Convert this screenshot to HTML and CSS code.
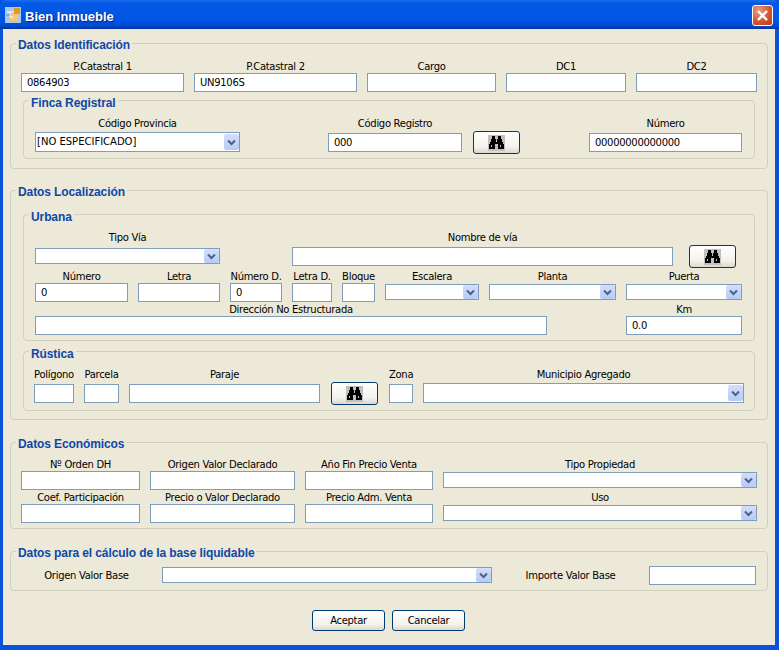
FILE: index.html
```html
<!DOCTYPE html>
<html lang="es">
<head>
    <meta charset="UTF-8">
    <title>Bien Inmueble</title>
    <link rel="stylesheet" href="styles.css">
</head>
<body>
    <svg class="defs" width="0" height="0">
        <symbol id="binoculars" viewBox="0 0 17 16">
            <rect width="17" height="16" fill="#c0c0c0"/>
            <path d="M4 1h3v3h1v2h1V4h1V1h3v3h1v3h1v2h1v5h-6V9H7v5H1V9h1V7h1V4h1z" fill="#000"/>
            <path d="M3 10h1v2H3zM12 10h1v2h-1zM8 6h1v1H8z" fill="#c0c0c0"/>
        </symbol>
        <symbol id="chevron" viewBox="0 0 9 7">
            <path d="M1 1.5l3.500 3.500L8 1.500" fill="none" stroke="#4d6185" stroke-width="2"/>
        </symbol>
    </svg>

    <div class="window">
        <header class="titlebar">
            <svg class="app-icon" width="16" height="16" viewBox="0 0 16 16">
                <rect width="16" height="16" fill="#a9c9ec"/>
                <rect x="9" y="1" width="6" height="6" fill="#e8981f"/>
                <rect x="5" y="7" width="8" height="7" fill="#f4c878"/>
                <path d="M2 5h7M5 5v5h3" stroke="#fff" fill="none"/>
                <path d="M1 8h4" stroke="#6f8fb8"/>
            </svg>
            <span class="title">Bien Inmueble</span>
            <button class="close" aria-label="Cerrar">
                <svg width="13" height="13" viewBox="0 0 13 13">
                    <path d="M2 2l9 9M11 2l-9 9" stroke="#fff" stroke-width="2.400"/>
                </svg>
            </button>
        </header>

        <form class="client">
            <!-- Datos Identificacion -->
            <fieldset class="group group-ident">
                <legend>Datos Identificación</legend>
                <div class="row">
                    <div class="field w163"><label>P.Catastral 1</label><input type="text" value="0864903"></div>
                    <div class="field w163"><label>P.Catastral 2</label><input type="text" value="UN9106S"></div>
                    <div class="field w129"><label>Cargo</label><input type="text"></div>
                    <div class="field w120"><label>DC1</label><input type="text"></div>
                    <div class="field w121"><label>DC2</label><input type="text"></div>
                </div>
                <fieldset class="group inner inner-finca">
                    <legend>Finca Registral</legend>
                    <div class="row row-tall">
                        <div class="field w205">
                            <label>Código Provincia</label>
                            <div class="combo combo-big"><span class="combo-value">[NO ESPECIFICADO]</span><span class="combo-arrow"><svg><use href="#chevron"/></svg></span></div>
                        </div>
                        <div class="field w134 push78"><label>Código Registro</label><input type="text" value="000"></div>
                        <div class="field w47 push1"><span></span><button type="button" class="btn"><svg class="find-icon"><use href="#binoculars"/></svg></button></div>
                        <div class="field w153 push59"><label>Número</label><input type="text" value="00000000000000"></div>
                    </div>
                </fieldset>
            </fieldset>

            <!-- Datos Localizacion -->
            <fieldset class="group group-loc">
                <legend>Datos Localización</legend>
                <fieldset class="group inner inner-urbana">
                    <legend>Urbana</legend>
                    <div class="row row-tall">
                        <div class="field w185">
                            <label>Tipo Vía</label>
                            <div class="combo"><span class="combo-value"></span><span class="combo-arrow"><svg><use href="#chevron"/></svg></span></div>
                        </div>
                        <div class="field w381 push62"><label>Nombre de vía</label><input type="text"></div>
                        <div class="field w47 push6"><span></span><button type="button" class="btn"><svg class="find-icon"><use href="#binoculars"/></svg></button></div>
                    </div>
                    <div class="row">
                        <div class="field w93"><label>Número</label><input type="text" value="0"></div>
                        <div class="field w82"><label>Letra</label><input type="text"></div>
                        <div class="field w52"><label>Número D.</label><input type="text" value="0"></div>
                        <div class="field w40"><label>Letra D.</label><input type="text"></div>
                        <div class="field w33"><label>Bloque</label><input type="text"></div>
                        <div class="field w94">
                            <label>Escalera</label>
                            <div class="combo"><span class="combo-value"></span><span class="combo-arrow"><svg><use href="#chevron"/></svg></span></div>
                        </div>
                        <div class="field w127">
                            <label>Planta</label>
                            <div class="combo"><span class="combo-value"></span><span class="combo-arrow"><svg><use href="#chevron"/></svg></span></div>
                        </div>
                        <div class="field w116">
                            <label>Puerta</label>
                            <div class="combo"><span class="combo-value"></span><span class="combo-arrow"><svg><use href="#chevron"/></svg></span></div>
                        </div>
                    </div>
                    <div class="row">
                        <div class="field w512"><label>Dirección No Estructurada</label><input type="text"></div>
                        <div class="field w116 push69"><label>Km</label><input type="text" value="0.0"></div>
                    </div>
                </fieldset>
                <fieldset class="group inner inner-rustica">
                    <legend>Rústica</legend>
                    <div class="row row-tall">
                        <div class="field w40"><label>Polígono</label><input type="text"></div>
                        <div class="field w35"><label>Parcela</label><input type="text"></div>
                        <div class="field w191"><label>Paraje</label><input type="text"></div>
                        <div class="field w47 push1"><span></span><button type="button" class="btn"><svg class="find-icon"><use href="#binoculars"/></svg></button></div>
                        <div class="field w24 push1"><label>Zona</label><input type="text"></div>
                        <div class="field w321">
                            <label>Municipio Agregado</label>
                            <div class="combo combo-big"><span class="combo-value"></span><span class="combo-arrow"><svg><use href="#chevron"/></svg></span></div>
                        </div>
                    </div>
                </fieldset>
            </fieldset>

            <!-- Datos Economicos -->
            <fieldset class="group group-eco">
                <legend>Datos Económicos</legend>
                <div class="row">
                    <div class="field w119"><label>Nº Orden DH</label><input type="text"></div>
                    <div class="field w145"><label>Origen Valor Declarado</label><input type="text"></div>
                    <div class="field w128"><label>Año Fin Precio Venta</label><input type="text"></div>
                    <div class="field w314">
                        <label>Tipo Propiedad</label>
                        <div class="combo"><span class="combo-value"></span><span class="combo-arrow"><svg><use href="#chevron"/></svg></span></div>
                    </div>
                </div>
                <div class="row">
                    <div class="field w119"><label>Coef. Participación</label><input type="text"></div>
                    <div class="field w145"><label>Precio o Valor Declarado</label><input type="text"></div>
                    <div class="field w128"><label>Precio Adm. Venta</label><input type="text"></div>
                    <div class="field w314">
                        <label>Uso</label>
                        <div class="combo"><span class="combo-value"></span><span class="combo-arrow"><svg><use href="#chevron"/></svg></span></div>
                    </div>
                </div>
            </fieldset>

            <!-- Base liquidable -->
            <fieldset class="group group-base">
                <legend>Datos para el cálculo de la base liquidable</legend>
                <div class="row row-inline">
                    <label class="w131">Origen Valor Base</label>
                    <div class="combo w330"><span class="combo-value"></span><span class="combo-arrow"><svg><use href="#chevron"/></svg></span></div>
                    <label class="w137">Importe Valor Base</label>
                    <input class="w107" type="text">
                </div>
            </fieldset>

            <div class="actions">
                <button type="button" class="btn btn-text">Aceptar</button>
                <button type="button" class="btn btn-text">Cancelar</button>
            </div>
        </form>
    </div>
</body>
</html>
```

FILE: styles.css
```css
html, body {
    margin: 0;
    height: 650px;
    overflow: hidden;
    background-color: #ece9d8;
}

body {
    font-family: "DejaVu Sans", Tahoma, sans-serif;
    font-size: 10px;
    letter-spacing: -0.3px;
    color: #000;
}

.defs {
    position: absolute;
}

.window {
    display: flex;
    flex-direction: column;
    width: 779px;
    height: 650px;
    box-sizing: border-box;
    background-color: #0a52dc;
}

/* Title bar */
.titlebar {
    display: flex;
    align-items: center;
    height: 29px;
    flex: none;
    padding: 1px 6px 0 5px;
    box-sizing: border-box;
    border-radius: 6px 6px 0 0;
    background: linear-gradient(#1c6cf0 0, #0458e6 3px, #0056e4 20px, #0049cf 26px, #00309e 29px);
}

.app-icon {
    flex: none;
    margin-right: 4px;
}

.title {
    flex: 1;
    padding-top: 2px;
    font-family: "Liberation Sans", Arial, sans-serif;
    font-size: 13px;
    font-weight: bold;
    letter-spacing: 0;
    color: #fff;
    text-shadow: 1px 1px 1px #0a1f7a;
}

.close {
    display: flex;
    align-items: center;
    justify-content: center;
    width: 21px;
    height: 21px;
    padding: 0;
    border: 1px solid #fff;
    border-radius: 3px;
    background: radial-gradient(circle at 30% 25%, #ea9a80, #d2522c 60%, #bd3a14);
}

/* Dialog client area */
.client {
    flex: 1;
    margin: 0 4px 5px 3px;
    padding: 5px 7px 0;
    background-color: #ece9d8;
}

.group {
    min-width: 0;
    margin: 0;
    padding: 0 0 0 10px;
    border: 1px solid #d0d0bf;
    border-radius: 4px;
    box-sizing: border-box;
}

.group legend {
    margin-left: -5px;
    padding: 5px 2px 0;
    font-family: "Liberation Sans", Arial, sans-serif;
    font-size: 12px;
    line-height: 13px;
    font-weight: bold;
    letter-spacing: -0.1px;
    color: #0f47a8;
}

.inner {
    margin-left: 2px;
    margin-right: 12px;
    padding-left: 11px;
}

.inner legend {
    margin-left: -6px;
    padding-top: 6px;
}

.group-ident {
    height: 135px;
}

.group-ident > .row {
    margin-top: 7px;
}

.inner-finca {
    margin-top: -1px;
    height: 68px;
}

.inner-finca .row {
    margin-top: 6px;
}

.group-loc {
    height: 239px;
    margin-top: 12px;
}

.inner-urbana {
    margin-top: 6px;
    height: 136px;
}

.inner-urbana .row-tall {
    margin-top: 6px;
    margin-bottom: 1px;
}

.inner-rustica {
    margin-top: 1px;
    padding-left: 10px;
    height: 69px;
}

.inner-rustica legend {
    margin-left: -5px;
}

.inner-rustica .row {
    margin-top: 6px;
}

.group-eco {
    height: 96px;
    margin-top: 13px;
}

.group-eco > .row:first-of-type {
    margin-top: 6px;
}

.group-base {
    height: 49px;
    margin-top: 13px;
}

/* Rows and fields */
.row {
    display: flex;
    gap: 10px;
}

.row-tall .field {
    row-gap: 1px;
}

.row-inline {
    align-items: center;
    margin-top: 6px;
}

.row-inline label {
    text-align: center;
    white-space: nowrap;
}

.field {
    display: grid;
    grid-template-columns: minmax(0, 1fr);
    grid-template-rows: 14px 1fr;
    align-items: center;
}

.field label {
    display: block;
    height: 14px;
    line-height: 16px;
    text-align: center;
    white-space: nowrap;
}

input {
    display: block;
    width: 100%;
    height: 19px;
    margin: 0;
    padding: 0 5px;
    box-sizing: border-box;
    border: 1px solid #7f9db9;
    border-radius: 0;
    outline: none;
    background-color: #fff;
    font: inherit;
    letter-spacing: inherit;
    color: #000;
}

.combo {
    display: flex;
    align-items: stretch;
    height: 16px;
    margin-bottom: 1px;
    box-sizing: border-box;
    border: 1px solid #7f9db9;
    background-color: #fff;
}

.combo-big {
    height: 20px;
}

.combo-value {
    flex: 1;
    padding-left: 1px;
    line-height: 17px;
    letter-spacing: 0;
    white-space: nowrap;
}

.combo-arrow {
    display: flex;
    align-items: center;
    justify-content: center;
    width: 15px;
    flex: none;
    border-radius: 2px;
    background: linear-gradient(#d2dffb, #b7cbf7);
}

.combo-big .combo-arrow {
    margin: 1px 0;
}

.combo-arrow svg {
    width: 9px;
    height: 7px;
}

.btn {
    display: flex;
    align-items: center;
    justify-content: center;
    padding: 0;
    height: 23px;
    width: 100%;
    box-sizing: border-box;
    border: 1px solid #003c74;
    border-radius: 3px;
    background: linear-gradient(#fff, #f3f2ec 70%, #dcd8cb);
    font: inherit;
    letter-spacing: inherit;
    color: #000;
}

.find-icon {
    width: 17px;
    height: 16px;
}

/* Bottom buttons */
.actions {
    display: flex;
    justify-content: center;
    gap: 7px;
    margin-top: 19px;
    padding-right: 1px;
}

.btn-text {
    width: 73px;
    height: 21px;
}

/* Field widths */
.w24 { width: 24px; }
.w33 { width: 33px; }
.w35 { width: 35px; }
.w40 { width: 40px; }
.w47 { width: 47px; }
.w52 { width: 52px; }
.w82 { width: 82px; }
.w93 { width: 93px; }
.w94 { width: 94px; }
.w107 { width: 107px; }
.w116 { width: 116px; }
.w119 { width: 119px; }
.w120 { width: 120px; }
.w121 { width: 121px; }
.w127 { width: 127px; }
.w128 { width: 128px; }
.w129 { width: 129px; }
.w131 { width: 131px; }
.w134 { width: 134px; }
.w137 { width: 137px; }
.w145 { width: 145px; }
.w153 { width: 153px; }
.w163 { width: 163px; }
.w185 { width: 185px; }
.w191 { width: 191px; }
.w205 { width: 205px; }
.w314 { width: 314px; }
.w321 { width: 321px; }
.w330 { width: 330px; }
.w381 { width: 381px; }
.w512 { width: 512px; }

/* Extra space on top of the row gap */
.push1 { margin-left: 1px; }
.push6 { margin-left: 6px; }
.push59 { margin-left: 59px; }
.push62 { margin-left: 62px; }
.push69 { margin-left: 69px; }
.push78 { margin-left: 78px; }
```
